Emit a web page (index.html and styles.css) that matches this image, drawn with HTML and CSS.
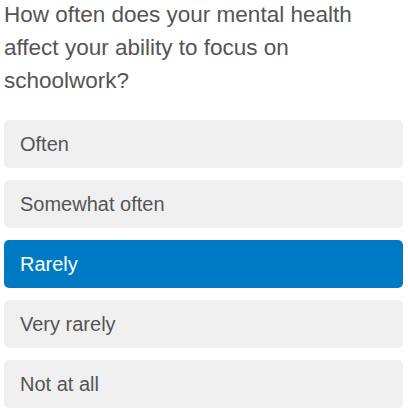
FILE: index.html
```html
<!DOCTYPE html>
<html lang="en">
<head>
<meta charset="utf-8">
<title>Survey question</title>
<link rel="stylesheet" href="styles.css">
</head>
<body>
  <div class="question">
    <h2 class="question-title">How often does your mental health affect your ability to focus on schoolwork?</h2>
    <div class="options">
      <div class="option">Often</div>
      <div class="option">Somewhat often</div>
      <div class="option option-selected">Rarely</div>
      <div class="option">Very rarely</div>
      <div class="option">Not at all</div>
    </div>
  </div>
</body>
</html>
```
FILE: styles.css
```css
html, body {
  margin: 0;
  padding: 0;
  background: #ffffff;
}

body {
  font-family: "Liberation Sans", Arial, sans-serif;
  color: #555555;
}

.question {
  padding: 0 5px 0 4px;
}

.question-title {
  margin: -2px 0 22.5px;
  font-size: 22.5px;
  line-height: 33px;
  font-weight: normal;
  color: #555555;
}

.options {
  display: flex;
  flex-direction: column;
  gap: 12px;
}

.option {
  background: #f0f0f0;
  border-radius: 5px;
  padding: 12px 16px;
  font-size: 20px;
  line-height: 24px;
  color: #555555;
}

.option-selected {
  background: #007ac2;
  color: #ffffff;
}
```
